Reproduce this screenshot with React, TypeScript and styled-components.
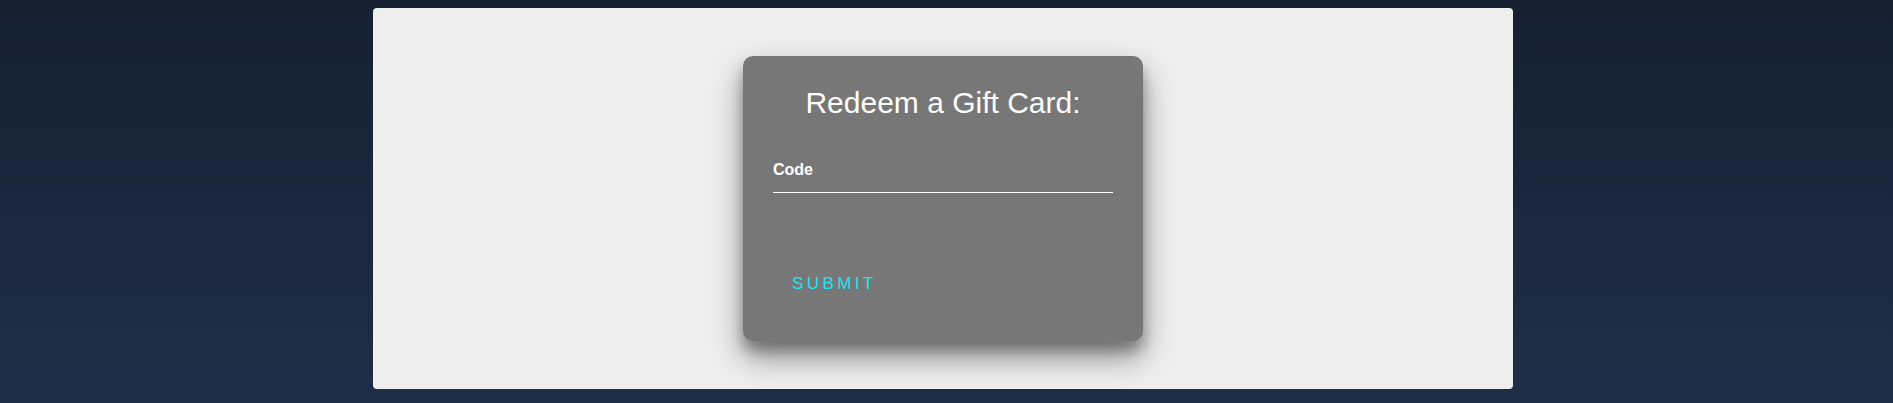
import React from "react";
import styled, { createGlobalStyle } from "styled-components";

const GlobalStyle = createGlobalStyle`
  html, body {
    margin: 0;
    padding: 0;
    min-height: 100%;
  }
  body {
    min-height: 100vh;
    background: linear-gradient(180deg, #162031 0%, #1f2e47 100%);
    font-family: "Liberation Sans", Arial, sans-serif;
  }
  * { box-sizing: border-box; }
`;

const Page = styled.div`
  display: flex;
  justify-content: center;
  padding: 8px 7px 0 0;
`;

const Panel = styled.main`
  width: 1140px;
  height: 381px;
  background: #eeeeee;
  border-radius: 4px;
  display: flex;
  justify-content: center;
  align-items: flex-start;
  padding-top: 48px;
`;

const Card = styled.form`
  width: 400px;
  height: 285px;
  background: #777777;
  border-radius: 10px;
  padding: 30px 30px 0;
  box-shadow: 0 16px 30px rgba(0, 0, 0, 0.42), 0 10px 12px rgba(0, 0, 0, 0.24);
  display: flex;
  flex-direction: column;
  align-items: stretch;
`;

const Title = styled.h2`
  margin: 0;
  font-size: 30px;
  font-weight: 400;
  line-height: normal;
  color: #ffffff;
  text-align: center;
`;

const Field = styled.div`
  margin-top: 41px;
  display: flex;
  flex-direction: column;
`;

const Label = styled.label`
  font-size: 16px;
  font-weight: 700;
  line-height: normal;
  color: #ffffff;
`;

const Input = styled.input`
  display: block;
  width: 100%;
  height: 14px;
  padding: 0;
  border: none;
  border-bottom: 1px solid #ffffff;
  background: transparent;
  color: #ffffff;
  font-family: inherit;
  outline: none;
`;

const SubmitButton = styled.button`
  align-self: flex-start;
  margin-top: 81px;
  padding: 0 19px;
  border: none;
  background: transparent;
  color: #1de4ef;
  font-family: "Liberation Sans", Arial, sans-serif;
  font-size: 17px;
  line-height: normal;
  letter-spacing: 3.4px;
  text-transform: uppercase;
  cursor: pointer;
`;

export default function App() {
  return (
    <>
      <GlobalStyle />
      <Page>
        <Panel>
          <Card onSubmit={(e) => e.preventDefault()}>
            <Title>Redeem a Gift Card:</Title>
            <Field>
              <Label htmlFor="code">Code</Label>
              <Input id="code" type="text" />
            </Field>
            <SubmitButton type="submit">Submit</SubmitButton>
          </Card>
        </Panel>
      </Page>
    </>
  );
}
